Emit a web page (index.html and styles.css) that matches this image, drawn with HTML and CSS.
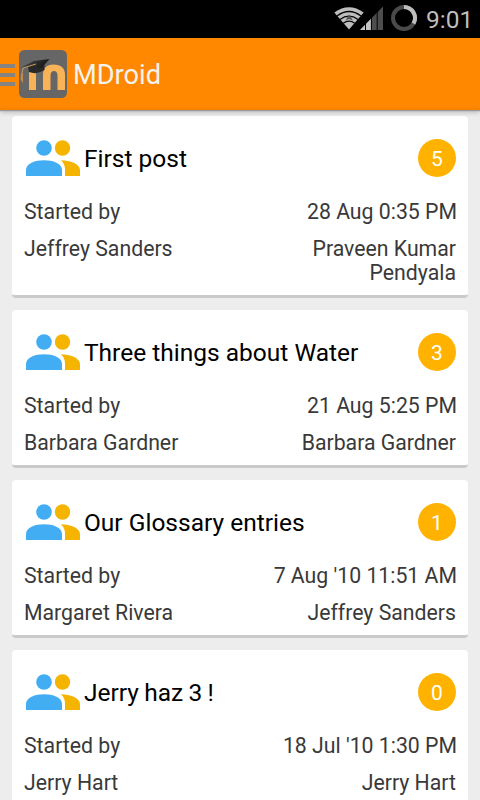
FILE: index.html
```html
<!DOCTYPE html>
<html lang="en">
<head>
<meta charset="utf-8">
<title>MDroid</title>
<link rel="stylesheet" href="styles.css">
</head>
<body>
<svg width="0" height="0" class="defs">
  <symbol id="people" viewBox="0 0 54 36">
    <circle cx="18" cy="8" r="7.8" fill="#42adf2"/>
    <circle cx="36.5" cy="8" r="7.7" fill="#f5b400"/>
    <path d="M0 36V30C0 23.500 9 20.300 18 20.300S36 23.500 36 30V36Z" fill="#42adf2"/>
    <path d="M35 20.300C44 20.300 54 24 54 30V36H39V30C39 26 38 23.500 35 20.300Z" fill="#f5b400"/>
  </symbol>
</svg>
<div class="status">
  <svg class="signals" width="84" height="30" viewBox="334 4 84 30">
    <path d="M349 29.500L334.300 12.600Q349 2 363.700 12.600Z" fill="#bebebe"/>
    <path d="M337 16Q349 7 361 16M340 19.500Q349 12.800 358 19.500M343.200 23.200Q349 19 354.800 23.200" fill="none" stroke="#050505" stroke-width="1.300"/>
    <path d="M349.200 14.500L353 20.500L349.200 19L345.500 20.500Z" fill="#555"/>
    <path d="M360 30L383 6.500V30Z" fill="#4d4d4d"/>
    <path d="M360 30L371 18.800V30Z" fill="#c4c4c4"/>
    <path d="M365.500 20V30M371.400 15V30M377.200 10V30" stroke="#000" stroke-width="1"/>
    <circle cx="404" cy="18" r="11" fill="none" stroke="#4a4a4a" stroke-width="4"/>
    <path d="M404 7A11 11 0 0 1 413.500 23.500" fill="none" stroke="#bebebe" stroke-width="4"/>
  </svg>
  <span class="clock">9:01</span>
</div>
<header class="bar">
  <div class="drawer"><i></i><i></i><i></i></div>
  <svg class="logo" width="48" height="48" viewBox="0 0 48 48">
    <defs><linearGradient id="cap" x1="0" y1="0" x2="1" y2="0.300"><stop offset="0" stop-color="#555"/><stop offset=".5" stop-color="#333"/><stop offset="1" stop-color="#161616"/></linearGradient></defs>
    <rect width="48" height="48" rx="5.500" fill="#666"/>
    <path d="M10 20H17V40H10Z" fill="#f8b359"/>
    <path d="M24 40V25Q24 14.500 34.500 14.500Q46 14.500 46 25V40H38.500V26Q38.500 21 35 21Q31.500 21 31.500 26V40Z" fill="#f8b359"/>
    <path d="M9 16L10 22Q18 25 25.500 20V14Z" fill="#292929"/>
    <path d="M2 17.500L15 11L30.500 9L22.500 18Q15 16 2 17.500Z" fill="url(#cap)"/>
    <path d="M17 14L4 18Q2.500 22 3.500 29" fill="none" stroke="#c79b63" stroke-width="1"/>
    <path d="M2.200 23L1.500 29L4 33.500L4 24Z" fill="#c18b49"/>
  </svg>
  <h1>MDroid</h1>
</header>
<main>
  <article class="card">
    <div class="head"><svg class="people"><use href="#people"/></svg><h2>First post</h2><span class="badge">5</span></div>
    <div class="row"><span>Started by</span><span class="end date">28 Aug 0:35 PM</span></div>
    <div class="row"><span>Jeffrey Sanders</span><span class="end">Praveen Kumar<br>Pendyala</span></div>
  </article>
  <article class="card">
    <div class="head"><svg class="people"><use href="#people"/></svg><h2>Three things about Water</h2><span class="badge">3</span></div>
    <div class="row"><span>Started by</span><span class="end date">21 Aug 5:25 PM</span></div>
    <div class="row"><span>Barbara Gardner</span><span class="end">Barbara Gardner</span></div>
  </article>
  <article class="card">
    <div class="head"><svg class="people"><use href="#people"/></svg><h2>Our Glossary entries</h2><span class="badge">1</span></div>
    <div class="row"><span>Started by</span><span class="end date">7 Aug '10 11:51 AM</span></div>
    <div class="row"><span>Margaret Rivera</span><span class="end">Jeffrey Sanders</span></div>
  </article>
  <article class="card">
    <div class="head"><svg class="people"><use href="#people"/></svg><h2 class="tight">Jerry haz 3 !</h2><span class="badge">0</span></div>
    <div class="row"><span>Started by</span><span class="end date">18 Jul '10 1:30 PM</span></div>
    <div class="row"><span>Jerry Hart</span><span class="end">Jerry Hart</span></div>
  </article>
</main>
</body>
</html>
```
FILE: styles.css
```css
* { box-sizing: border-box; }
body {
  margin: 0;
  height: 800px;
  overflow: hidden;
  display: flex;
  flex-direction: column;
  background: #ededed;
  font-family: Roboto, "Liberation Sans", sans-serif;
}
h1, h2 { margin: 0; font-weight: 400; white-space: nowrap; }
.defs { position: absolute; }
.status {
  flex: none;
  height: 38px;
  padding: 4px 10px 0 0;
  background: #000;
  display: flex;
  justify-content: flex-end;
}
.signals { flex: none; }
.clock {
  width: 44px;
  margin-left: 8px;
  font-size: 24.5px;
  line-height: 32px;
  color: #bebebe;
}
.bar {
  flex: none;
  height: 72px;
  padding-top: 2px;
  background: #ff8800;
  border-bottom: 2px solid #f58200;
  display: flex;
  align-items: center;
  box-shadow: 0 1px 1px #999, 0 2px 5px rgba(0, 0, 0, .25);
  z-index: 1;
}
.drawer { width: 15px; margin-right: 4px; padding-top: 2px; display: flex; flex-direction: column; gap: 5px; }
.drawer i { height: 4px; background: #868482; }
.logo { flex: none; }
.bar h1 { margin-left: 6px; padding-top: 2px; font-size: 27.2px; color: #f5f3f0; }
main { padding: 6px 12px 0; display: flex; flex-direction: column; gap: 12px; }
.card {
  flex: none;
  padding: 23px 12px 10px;
  background: #fff;
  border-bottom: 3px solid #cacaca;
  border-radius: 4px;
}
.head { display: flex; align-items: center; height: 38px; margin-bottom: 23px; }
.people { width: 54px; height: 36px; margin: 0 4px 0 2px; flex: none; }
.head h2 { flex: 1; padding-top: 2px; font-size: 24.5px; line-height: 38px; color: #000; }
.head .tight { word-spacing: -.8px; }
.badge {
  width: 38px;
  height: 38px;
  border-radius: 50%;
  background: #ffb300;
  color: #fff;
  font-size: 21px;
  line-height: 40px;
  text-align: center;
}
.row { display: flex; justify-content: space-between; font-size: 21.25px; line-height: 24px; color: #393939; }
.row + .row { margin-top: 13px; }
.end { text-align: right; }
.date { margin-right: -1px; }
```
